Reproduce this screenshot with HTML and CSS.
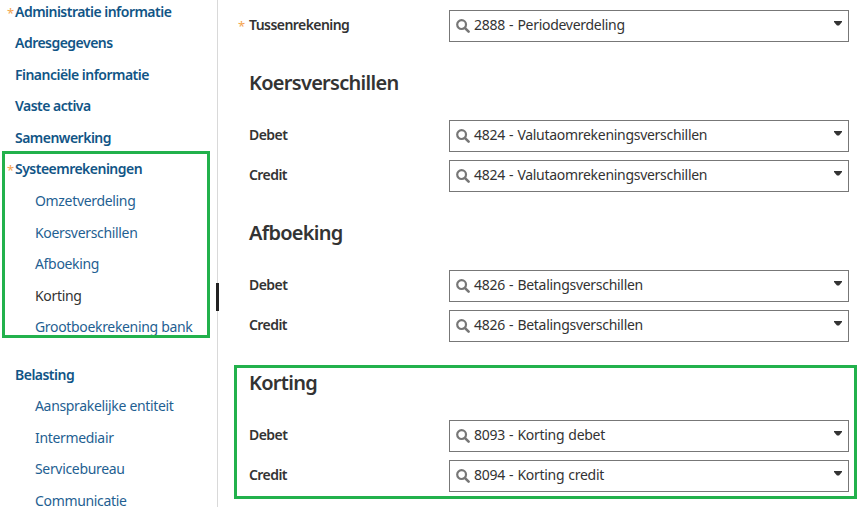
FILE: index.html
```html
<!DOCTYPE html>
<html lang="nl">
<head>
<meta charset="utf-8">
<title>Systeemrekeningen</title>
<link rel="stylesheet" href="styles.css">
</head>
<body>
<div class="page">
  <nav class="side">
    <a class="nav top"><span class="star">*</span>Administratie informatie</a>
    <a class="nav top"><span class="star"></span>Adresgegevens</a>
    <a class="nav top"><span class="star"></span>Financiële informatie</a>
    <a class="nav top"><span class="star"></span>Vaste activa</a>
    <a class="nav top"><span class="star"></span>Samenwerking</a>
    <a class="nav top"><span class="star">*</span>Systeemrekeningen</a>
    <a class="nav sub first">Omzetverdeling</a>
    <a class="nav sub">Koersverschillen</a>
    <a class="nav sub">Afboeking</a>
    <a class="nav sub current">Korting</a>
    <a class="nav sub">Grootboekrekening bank</a>
    <a class="nav top group"><span class="star"></span>Belasting</a>
    <a class="nav sub">Aansprakelijke entiteit</a>
    <a class="nav sub">Intermediair</a>
    <a class="nav sub">Servicebureau</a>
    <a class="nav sub">Communicatie</a>
  </nav>
  <main class="main">
    <div class="row">
      <label class="label"><span class="req">*</span>Tussenrekening</label>
      <div class="select">
        <svg class="mag" viewBox="0 0 14 14"><circle cx="5.6" cy="5.6" r="4.4" fill="none" stroke="#777" stroke-width="2.2"/><path d="M8.8 8.8 12.6 12.6" stroke="#777" stroke-width="2.6" stroke-linecap="round"/></svg>
        <span class="val">2888 - Periodeverdeling</span>
        <svg class="caret" viewBox="0 0 8 5"><path d="M0 0H8V1L5 4.6H3L0 1Z" fill="#333"/></svg>
      </div>
    </div>
    <section>
      <h2 class="head">Koersverschillen</h2>
      <div class="row">
        <label class="label">Debet</label>
        <div class="select">
          <svg class="mag" viewBox="0 0 14 14"><circle cx="5.6" cy="5.6" r="4.4" fill="none" stroke="#777" stroke-width="2.2"/><path d="M8.8 8.8 12.6 12.6" stroke="#777" stroke-width="2.6" stroke-linecap="round"/></svg>
          <span class="val">4824 - Valutaomrekeningsverschillen</span>
          <svg class="caret" viewBox="0 0 8 5"><path d="M0 0H8V1L5 4.6H3L0 1Z" fill="#333"/></svg>
        </div>
      </div>
      <div class="row">
        <label class="label">Credit</label>
        <div class="select">
          <svg class="mag" viewBox="0 0 14 14"><circle cx="5.6" cy="5.6" r="4.4" fill="none" stroke="#777" stroke-width="2.2"/><path d="M8.8 8.8 12.6 12.6" stroke="#777" stroke-width="2.6" stroke-linecap="round"/></svg>
          <span class="val">4824 - Valutaomrekeningsverschillen</span>
          <svg class="caret" viewBox="0 0 8 5"><path d="M0 0H8V1L5 4.6H3L0 1Z" fill="#333"/></svg>
        </div>
      </div>
    </section>
    <section>
      <h2 class="head">Afboeking</h2>
      <div class="row">
        <label class="label">Debet</label>
        <div class="select">
          <svg class="mag" viewBox="0 0 14 14"><circle cx="5.6" cy="5.6" r="4.4" fill="none" stroke="#777" stroke-width="2.2"/><path d="M8.8 8.8 12.6 12.6" stroke="#777" stroke-width="2.6" stroke-linecap="round"/></svg>
          <span class="val">4826 - Betalingsverschillen</span>
          <svg class="caret" viewBox="0 0 8 5"><path d="M0 0H8V1L5 4.6H3L0 1Z" fill="#333"/></svg>
        </div>
      </div>
      <div class="row">
        <label class="label">Credit</label>
        <div class="select">
          <svg class="mag" viewBox="0 0 14 14"><circle cx="5.6" cy="5.6" r="4.4" fill="none" stroke="#777" stroke-width="2.2"/><path d="M8.8 8.8 12.6 12.6" stroke="#777" stroke-width="2.6" stroke-linecap="round"/></svg>
          <span class="val">4826 - Betalingsverschillen</span>
          <svg class="caret" viewBox="0 0 8 5"><path d="M0 0H8V1L5 4.6H3L0 1Z" fill="#333"/></svg>
        </div>
      </div>
    </section>
    <section>
      <h2 class="head">Korting</h2>
      <div class="row">
        <label class="label">Debet</label>
        <div class="select">
          <svg class="mag" viewBox="0 0 14 14"><circle cx="5.6" cy="5.6" r="4.4" fill="none" stroke="#777" stroke-width="2.2"/><path d="M8.8 8.8 12.6 12.6" stroke="#777" stroke-width="2.6" stroke-linecap="round"/></svg>
          <span class="val">8093 - Korting debet</span>
          <svg class="caret" viewBox="0 0 8 5"><path d="M0 0H8V1L5 4.6H3L0 1Z" fill="#333"/></svg>
        </div>
      </div>
      <div class="row">
        <label class="label">Credit</label>
        <div class="select">
          <svg class="mag" viewBox="0 0 14 14"><circle cx="5.6" cy="5.6" r="4.4" fill="none" stroke="#777" stroke-width="2.2"/><path d="M8.8 8.8 12.6 12.6" stroke="#777" stroke-width="2.6" stroke-linecap="round"/></svg>
          <span class="val">8094 - Korting credit</span>
          <svg class="caret" viewBox="0 0 8 5"><path d="M0 0H8V1L5 4.6H3L0 1Z" fill="#333"/></svg>
        </div>
      </div>
    </section>
  </main>
  <div class="handle"></div>
  <div class="mark mark-side"></div>
  <div class="mark mark-main"></div>
</div>
</body>
</html>
```

FILE: styles.css
```css
* { box-sizing: border-box; }
html, body { margin: 0; padding: 0; height: 100%; overflow: hidden; background: #fff; }
body { font-family: "Noto Sans", "Open Sans", sans-serif; font-size: 14px; color: #333; }
.page { position: relative; display: flex; width: 862px; height: 507px; overflow: hidden; }

.side { flex: 0 0 218px; height: 507px; border-right: 1px solid #d9d9d9; overflow: visible; }
.side > .nav:first-child { margin-top: -4px; }
.nav { display: flex; height: 31.5px; align-items: center; line-height: 20px; color: #1f5f92; white-space: nowrap; letter-spacing: -0.33px; }
.nav.top { font-weight: 600; color: #115586; letter-spacing: -0.52px; }
.nav.sub { padding-left: 35px; }
.nav.first { margin-top: 0.5px; }
.nav.current { color: #333; }
.nav.group { margin-top: 16px; }
.star { flex: 0 0 15px; padding: 3px 0 0 7px; color: #f4a450; font-weight: 400; font-size: 13px; line-height: 17px; }

.main { flex: 1; padding: 10px 0 0 31px; }
.row { display: flex; align-items: center; height: 32px; margin-bottom: 8px; position: relative; }
.label { flex: 0 0 200px; font-weight: 600; color: #333; letter-spacing: -0.56px; padding-bottom: 3px; }
.req { position: absolute; left: -11px; top: 8px; color: #f4a450; font-weight: 400; font-size: 13px; line-height: 17px; }
.head { height: 70px; margin: 0; padding-top: 18px; font-size: 20px; line-height: 30px; font-weight: 600; color: #333; letter-spacing: -0.72px; }
.select { flex: 0 0 400px; display: flex; align-items: center; height: 32px; border: 1px solid #777; padding: 0 6px; }
.mag { width: 14px; height: 14px; margin-right: 4px; flex: none; }
.val { flex: 1; white-space: nowrap; letter-spacing: -0.29px; word-spacing: 0.8px; padding-bottom: 3px; }
.caret { width: 8px; height: 5px; flex: none; margin: -6px 0 0 0; }

.handle { position: absolute; left: 216px; top: 283px; width: 3px; height: 28px; background: #222; }
.mark { position: absolute; border: 3px solid #22b14c; pointer-events: none; }
.mark-side { left: 2px; top: 151px; width: 208px; height: 187px; }
.mark-main { left: 234px; top: 365px; width: 623px; height: 134px; }
```
